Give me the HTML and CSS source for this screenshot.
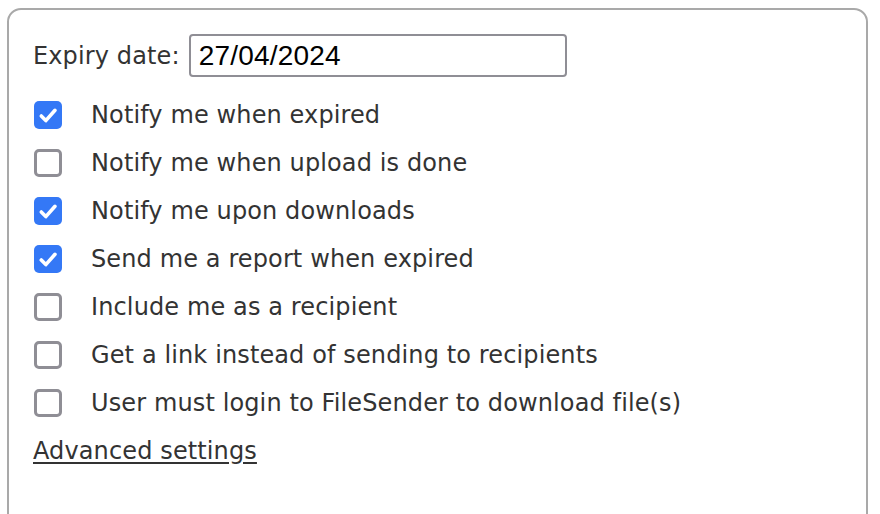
FILE: index.html
```html
<!DOCTYPE html>
<html>
<head>
<meta charset="utf-8">
<link rel="stylesheet" href="styles.css">
</head>
<body>
<div class="panel">
  <div class="expiry">
    <label class="expiry-label" for="exp">Expiry date:</label>
    <input id="exp" class="date" type="text" value="27/04/2024">
  </div>
  <ul class="options">
    <li class="opt"><span class="box on"><svg viewBox="0 0 28 28" width="28" height="28"><path d="M7.3 15 L11.8 19.6 L21 9.3" fill="none" stroke="#fff" stroke-width="3.6" stroke-linecap="round" stroke-linejoin="round"/></svg></span><span class="txt">Notify me when expired</span></li>
    <li class="opt"><span class="box"></span><span class="txt">Notify me when upload is done</span></li>
    <li class="opt"><span class="box on"><svg viewBox="0 0 28 28" width="28" height="28"><path d="M7.3 15 L11.8 19.6 L21 9.3" fill="none" stroke="#fff" stroke-width="3.6" stroke-linecap="round" stroke-linejoin="round"/></svg></span><span class="txt">Notify me upon downloads</span></li>
    <li class="opt"><span class="box on"><svg viewBox="0 0 28 28" width="28" height="28"><path d="M7.3 15 L11.8 19.6 L21 9.3" fill="none" stroke="#fff" stroke-width="3.6" stroke-linecap="round" stroke-linejoin="round"/></svg></span><span class="txt">Send me a report when expired</span></li>
    <li class="opt"><span class="box"></span><span class="txt">Include me as a recipient</span></li>
    <li class="opt"><span class="box"></span><span class="txt">Get a link instead of sending to recipients</span></li>
    <li class="opt"><span class="box"></span><span class="txt">User must login to FileSender to download file(s)</span></li>
  </ul>
  <a class="advanced" href="#">Advanced settings</a>
</div>
</body>
</html>
```
FILE: styles.css
```css
html, body {
  margin: 0;
  padding: 0;
  background: #fff;
}
body {
  font-family: "DejaVu Sans", Verdana, sans-serif;
  font-size: 24px;
  letter-spacing: 0.12px;
  color: #333;
  height: 514px;
  overflow: hidden;
}
.panel {
  margin: 8px 12px 0 7px;
  border: 2px solid #a9a9a9;
  border-radius: 14px;
  padding: 24px 24px 0 24px;
  height: 520px;
  box-sizing: border-box;
}
.expiry {
  display: flex;
  align-items: center;
  gap: 9px;
  height: 43px;
  margin-bottom: 14px;
}
.date {
  width: 378px;
  height: 43px;
  box-sizing: border-box;
  border: 2px solid #8f8e95;
  border-radius: 4px;
  padding: 0 8px;
  font-family: "Liberation Sans", Arial, sans-serif;
  font-size: 28px;
  letter-spacing: 0.2px;
  color: #000;
  outline: none;
}
.options {
  list-style: none;
  margin: 0;
  padding: 0;
}
.opt {
  display: flex;
  align-items: center;
  height: 48px;
}
.box {
  width: 28px;
  height: 28px;
  box-sizing: border-box;
  border: 3px solid #8f8e95;
  border-radius: 5px;
  margin-left: 1px;
  margin-right: 29px;
  flex: none;
}
.box.on {
  background: #3478f6;
  border: none;
}
.box svg {
  display: block;
}
.advanced {
  display: block;
  line-height: 48px;
  color: #333;
  text-decoration: underline;
  text-underline-offset: 3px;
  width: max-content;
}
```
